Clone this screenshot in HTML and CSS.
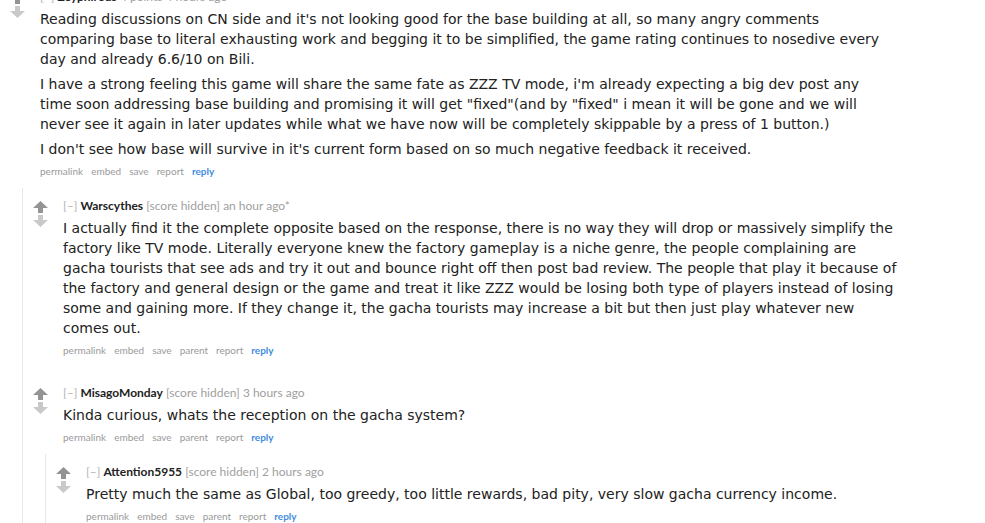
FILE: index.html
```html
<!DOCTYPE html>
<html lang="en">
<head>
<meta charset="utf-8">
<title>Comments</title>
<link rel="stylesheet" href="styles.css">
</head>
<body>
<div class="thread">
  <div class="comment">
    <div class="row">
      <div class="midcol">
        <svg class="arrow up" viewBox="0 0 15 14" width="15" height="14"><polygon points="7.5,1 15,8 10,8 10,13 5,13 5,8 0,8"/></svg>
        <svg class="arrow down" viewBox="0 0 15 14" width="15" height="14"><polygon points="5,1 10,1 10,6 15,6 7.5,13 0,6 5,6"/></svg>
      </div>
      <div class="entry">
        <p class="tagline"><span class="expand">[–]</span> <span class="author">Zeyphirous</span> <span class="score">4 points</span> <span class="time">4 hours ago</span></p>
        <div class="md">
          <p>Reading discussions on CN side and it's not looking good for the base building at all, so many angry comments comparing base to literal exhausting work and begging it to be simplified, the game rating continues to nosedive every day and already 6.6/10 on Bili.</p>
          <p>I have a strong feeling this game will share the same fate as ZZZ TV mode, i'm already expecting a big dev post any time soon addressing base building and promising it will get "fixed"(and by "fixed" i mean it will be gone and we will never see it again in later updates while what we have now will be completely skippable by a press of 1 button.)</p>
          <p>I don't see how base will survive in it's current form based on so much negative feedback it received.</p>
        </div>
        <ul class="flat-list">
          <li>permalink</li><li>embed</li><li>save</li><li>report</li><li class="reply">reply</li>
        </ul>
      </div>
    </div>
    <div class="child">
      <div class="comment">
        <div class="row">
          <div class="midcol">
            <svg class="arrow up" viewBox="0 0 15 14" width="15" height="14"><polygon points="7.5,1 15,8 10,8 10,13 5,13 5,8 0,8"/></svg>
            <svg class="arrow down" viewBox="0 0 15 14" width="15" height="14"><polygon points="5,1 10,1 10,6 15,6 7.5,13 0,6 5,6"/></svg>
          </div>
          <div class="entry">
            <p class="tagline"><span class="expand">[–]</span> <span class="author">Warscythes</span> <span class="score">[score hidden]</span> <span class="time">an hour ago*</span></p>
            <div class="md">
              <p>I actually find it the complete opposite based on the response, there is no way they will drop or massively simplify the factory like TV mode. Literally everyone knew the factory gameplay is a niche genre, the people complaining are gacha tourists that see ads and try it out and bounce right off then post bad review. The people that play it because of the factory and general design or the game and treat it like ZZZ would be losing both type of players instead of losing some and gaining more. If they change it, the gacha tourists may increase a bit but then just play whatever new comes out.</p>
            </div>
            <ul class="flat-list">
              <li>permalink</li><li>embed</li><li>save</li><li>parent</li><li>report</li><li class="reply">reply</li>
            </ul>
          </div>
        </div>
      </div>
      <div class="comment">
        <div class="row">
          <div class="midcol">
            <svg class="arrow up" viewBox="0 0 15 14" width="15" height="14"><polygon points="7.5,1 15,8 10,8 10,13 5,13 5,8 0,8"/></svg>
            <svg class="arrow down" viewBox="0 0 15 14" width="15" height="14"><polygon points="5,1 10,1 10,6 15,6 7.5,13 0,6 5,6"/></svg>
          </div>
          <div class="entry">
            <p class="tagline"><span class="expand">[–]</span> <span class="author">MisagoMonday</span> <span class="score">[score hidden]</span> <span class="time">3 hours ago</span></p>
            <div class="md">
              <p>Kinda curious, whats the reception on the gacha system?</p>
            </div>
            <ul class="flat-list">
              <li>permalink</li><li>embed</li><li>save</li><li>parent</li><li>report</li><li class="reply">reply</li>
            </ul>
          </div>
        </div>
        <div class="child">
          <div class="comment">
            <div class="row">
              <div class="midcol">
                <svg class="arrow up" viewBox="0 0 15 14" width="15" height="14"><polygon points="7.5,1 15,8 10,8 10,13 5,13 5,8 0,8"/></svg>
                <svg class="arrow down" viewBox="0 0 15 14" width="15" height="14"><polygon points="5,1 10,1 10,6 15,6 7.5,13 0,6 5,6"/></svg>
              </div>
              <div class="entry">
                <p class="tagline"><span class="expand">[–]</span> <span class="author">Attention5955</span> <span class="score">[score hidden]</span> <span class="time">2 hours ago</span></p>
                <div class="md">
                  <p>Pretty much the same as Global, too greedy, too little rewards, bad pity, very slow gacha currency income.</p>
                </div>
                <ul class="flat-list">
                  <li>permalink</li><li>embed</li><li>save</li><li>parent</li><li>report</li><li class="reply">reply</li>
                </ul>
              </div>
            </div>
          </div>
        </div>
      </div>
    </div>
  </div>
</div>
</body>
</html>
```
FILE: styles.css
```css
html, body {
  background: #ffffff;
}
body {
  margin: 0;
  font-family: "DejaVu Sans", Verdana, sans-serif;
  color: #222222;
  overflow: hidden;
}
.thread {
  margin-top: -21px;
}
.comment {
  padding: 11px 0 7px;
}
.comment + .comment {
  margin-top: 11px;
}
.row {
  display: flex;
  align-items: flex-start;
}
.midcol {
  flex: none;
  width: 15px;
  margin: 1px 15px 0 10px;
  display: flex;
  flex-direction: column;
}
.arrow {
  display: block;
}
.arrow.up {
  fill: #949494;
}
.arrow.down {
  fill: #c9c9c9;
}
.entry {
  flex: 1;
  min-width: 0;
}
.tagline {
  margin: 0 0 5px;
  font-family: Lato, "Liberation Sans", sans-serif;
  font-size: 12px;
  line-height: 14px;
  color: #a0a0a0;
  white-space: nowrap;
}
.tagline .expand {
  color: #b4b4b4;
}
.tagline .author {
  color: #222222;
  font-weight: bold;
}
.md {
  font-size: 14px;
  line-height: 20px;
  max-width: 60em;
}
.md p {
  margin: 0 0 5px;
}
.flat-list {
  list-style: none;
  margin: 0;
  padding: 0;
  display: flex;
  gap: 8px;
  font-family: Lato, "Liberation Sans", sans-serif;
  font-size: 10px;
  line-height: 14px;
  color: #9a9a9a;
}
.flat-list .reply {
  color: #3f8de0;
  font-weight: bold;
}
.child {
  margin: 10px 0 0 22px;
  border-left: 1px solid #e8e8e8;
}
```
